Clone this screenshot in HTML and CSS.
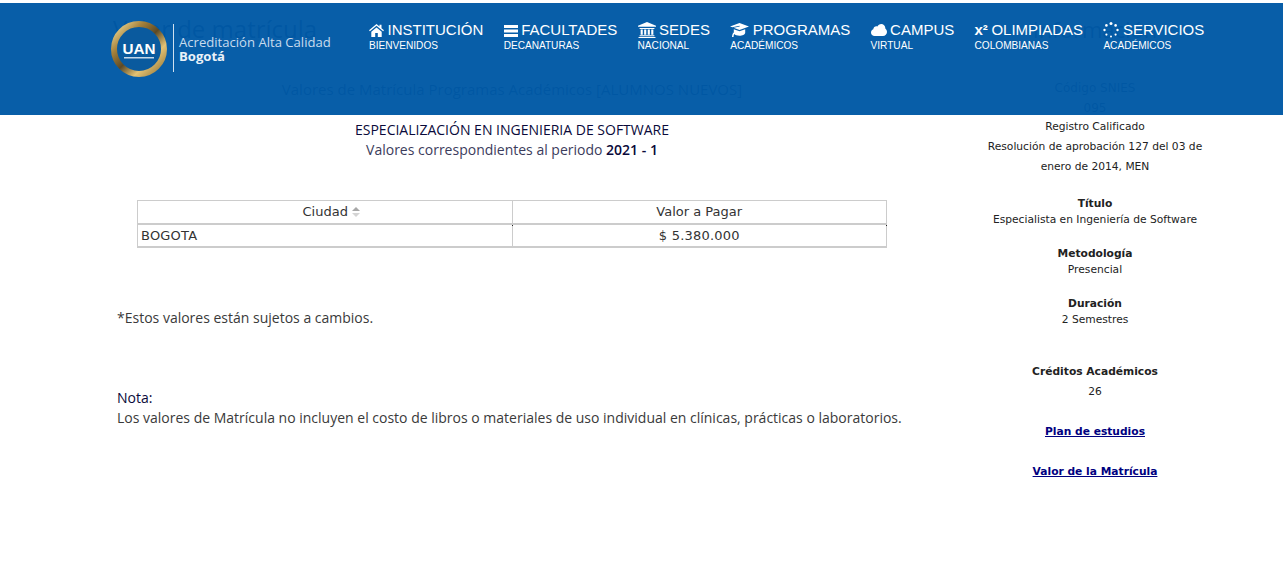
FILE: index.html
```html
<!DOCTYPE html>
<html lang="es">
<head>
<meta charset="utf-8">
<title>Valor de matrícula</title>
<link rel="stylesheet" href="styles.css">
</head>
<body>
<header class="topbar">
  <div class="brand">
    <svg class="logo" width="60" height="60" viewBox="0 0 60 60">
      <defs>
        <linearGradient id="gold" x1="0" y1="0" x2="1" y2="1">
          <stop offset="0" stop-color="#f6e3a0"/>
          <stop offset=".28" stop-color="#a5813a"/>
          <stop offset=".5" stop-color="#5c4a26"/>
          <stop offset=".72" stop-color="#e3c274"/>
          <stop offset="1" stop-color="#8f7335"/>
        </linearGradient>
      </defs>
      <circle cx="29" cy="29" r="25" fill="#0a5a9e" stroke="url(#gold)" stroke-width="6"/>
      <text x="29" y="34" text-anchor="middle" textLength="33" lengthAdjust="spacingAndGlyphs" class="logo-text">UAN</text>
      <rect x="14" y="37" width="30" height="1.500" fill="#c7d9ea"/>
    </svg>
    <span class="brand-rule"></span>
    <div class="brand-text">
      <span class="brand-line">Acreditación Alta Calidad</span>
      <strong class="brand-city">Bogotá</strong>
    </div>
  </div>
  <nav class="nav">
    <a class="nav-item">
      <span class="nav-main">
        <svg class="ic" width="15" height="13" viewBox="0 0 15 13"><path d="M7.500 0 0 6.300l.9 1L7.500 1.800l6.600 5.500.9-1L12.500 4.200V.7h-2v1.800zM2.300 7.700V13h3.900V9h2.600v4h3.900V7.700L7.500 3.400z"/></svg>
        INSTITUCIÓN
      </span>
      <span class="nav-sub">BIENVENIDOS</span>
    </a>
    <a class="nav-item">
      <span class="nav-main">
        <svg class="ic" width="14" height="13" viewBox="0 0 14 13"><path d="M0 1h14v3H0zM0 5.500h14v3H0zM0 10h14v3H0z"/></svg>
        FACULTADES
      </span>
      <span class="nav-sub">DECANATURAS</span>
    </a>
    <a class="nav-item">
      <span class="nav-main">
        <svg class="ic" width="18" height="16" viewBox="0 0 17 15"><path d="M8.500 0 17 3.400v1.100H0V3.400zM1.500 5.500h14v1H1.500zM2.500 7h2v5h-2zM5.800 7h2v5h-2zM9.200 7h2v5h-2zM12.500 7h2v5h-2zM1.500 12.500h14v1H1.500zM.5 14h16v1H.5z"/></svg>
        SEDES
      </span>
      <span class="nav-sub">NACIONAL</span>
    </a>
    <a class="nav-item">
      <span class="nav-main">
        <svg class="ic" width="19" height="14" viewBox="0 0 19 14"><path d="M9.500 0 19 3.500 9.500 7 3.600 4.800 9.700 3.600l-.2-.8-7 1.400L0 3.500zM3.800 6.200l5.700 2.100 5.700-2.100v3.600c0 1.700-3 3-5.700 3-2.300 0-4.300-.7-5.300-1.700-.4.800-.6 1.800-.7 2.900H2c.1-1.500.4-2.900 1-3.800-.2-.3-.2-.5-.2-.7l1 .4z"/></svg>
        PROGRAMAS
      </span>
      <span class="nav-sub">ACADÉMICOS</span>
    </a>
    <a class="nav-item">
      <span class="nav-main">
        <svg class="ic" width="16" height="12" viewBox="0 0 16 12"><path d="M3.600 12C1.600 12 0 10.500 0 8.500c0-1.500.9-2.800 2.300-3.300C2.500 3.500 3.800 2.300 5.400 2.300c.4 0 .7.100 1 .2C7.100 1 8.600 0 10.200 0c2.300 0 4.100 1.800 4.100 4.100v.5C15.300 5.300 16 6.600 16 8c0 2.200-1.800 4-4 4z"/></svg>
        CAMPUS
      </span>
      <span class="nav-sub">VIRTUAL</span>
    </a>
    <a class="nav-item">
      <span class="nav-main"><b class="sup-icon">x²</b> OLIMPIADAS</span>
      <span class="nav-sub">COLOMBIANAS</span>
    </a>
    <a class="nav-item">
      <span class="nav-main">
        <svg class="ic" width="16" height="16" viewBox="0 0 16 16"><g><circle cx="8" cy="1.500" r="1.500"/><circle cx="12.600" cy="3.400" r="1.300"/><circle cx="14.500" cy="8" r="1.200"/><circle cx="12.600" cy="12.600" r="1.100"/><circle cx="8" cy="14.500" r="1"/><circle cx="3.400" cy="12.600" r="1.100"/><circle cx="1.500" cy="8" r="1.200"/><circle cx="3.400" cy="3.400" r="1.300"/></g></svg>
        SERVICIOS
      </span>
      <span class="nav-sub">ACADÉMICOS</span>
    </a>
  </nav>
</header>

<div class="page">
  <main class="content">
    <h1 class="page-title">Valor de matrícula</h1>
    <h2 class="section-title">Valores de Matrícula Programas Académicos [ALUMNOS NUEVOS]</h2>
    <p class="program">ESPECIALIZACIÓN EN INGENIERIA DE SOFTWARE</p>
    <p class="period">Valores correspondientes al periodo <strong>2021 - 1</strong></p>
    <table class="prices">
      <thead>
        <tr>
          <th class="sortable">Ciudad
            <svg class="sort" width="8" height="10" viewBox="0 0 8 10"><path class="sort-up" d="M4 0l4 4H0z"/><path class="sort-down" d="M0 6h8l-4 4z"/></svg>
          </th>
          <th>Valor a Pagar</th>
        </tr>
      </thead>
      <tbody>
        <tr>
          <td class="city">BOGOTA</td>
          <td class="amount">$ 5.380.000</td>
        </tr>
      </tbody>
    </table>
    <p class="disclaimer">*Estos valores están sujetos a cambios.</p>
    <p class="note"><span class="note-label">Nota:</span><br>Los valores de Matrícula no incluyen el costo de libros o materiales de uso individual en clínicas, prácticas o laboratorios.</p>
  </main>
  <aside class="sidebar">
    <h3 class="side-title">Información</h3>
    <p class="side-snies">Código SNIES</p>
    <p class="side-snies">095</p>
    <p class="side-line">Registro Calificado</p>
    <p class="side-line">Resolución de aprobación 127 del 03 de enero de 2014, MEN</p>
    <dl class="facts">
      <dt>Título</dt><dd>Especialista en Ingeniería de Software</dd>
      <dt>Metodología</dt><dd>Presencial</dd>
      <dt>Duración</dt><dd>2 Semestres</dd>
    </dl>
    <p class="credits-label">Créditos Académicos</p>
    <p class="credits-value">26</p>
    <a class="side-link" href="#">Plan de estudios</a>
    <a class="side-link" href="#">Valor de la Matrícula</a>
  </aside>
</div>
</body>
</html>
```
FILE: styles.css
```css
* { box-sizing: border-box; }
html, body { margin: 0; padding: 0; background: #fff; }
body { font-family: "Open Sans", sans-serif; color: #333; height: 562px; overflow: hidden; }

.topbar {
  position: absolute;
  top: 3px; left: 0; right: 0;
  height: 112px;
  background: rgba(0, 89, 165, 0.97);
  display: flex;
  align-items: flex-start;
  padding-left: 110px;
  color: #fff;
  z-index: 5;
}
.brand { display: flex; align-items: flex-start; width: 259px; padding-top: 17px; }
.logo { display: block; flex: none; }
.logo-text { font: 700 14px "Liberation Sans", sans-serif; fill: #fff; }
.brand-rule { width: 1px; height: 48px; margin: 4px 5px 0 3px; background: #cfe0ef; }
.brand-text { display: flex; flex-direction: column; padding-top: 15px; line-height: 14px; }
.brand-line { font-size: 13.100px; color: #c9dcee; white-space: nowrap; }
.brand-city { font-size: 13.100px; font-weight: 700; color: #e9f1f8; }

.nav { display: flex; gap: 20.300px; padding-top: 18px; font-family: "Liberation Sans", sans-serif; }
.nav-item { display: flex; flex-direction: column; white-space: nowrap; }
.nav-main { display: flex; align-items: center; gap: 3.500px; font-size: 15px; line-height: 18px; height: 18px; }
.nav-sub { font-size: 10.100px; line-height: 12px; margin-top: 1px; }
.ic { fill: #fff; flex: none; }
.sup-icon { font-size: 15px; font-weight: 700; }

.page { display: flex; padding-left: 117px; }
.content { width: 790px; flex: none; }
.page-title { margin: 13px 0 0 -4px; font-size: 24px; line-height: 32px; font-weight: 400; color: #1a2a5a; }
.section-title { margin: 33px 0 0; font-size: 15px; line-height: 22px; font-weight: 400; text-align: center; color: #1a2a5a; }
.program { margin: 20px 0 0; font-size: 14px; line-height: 20px; text-align: center; color: #0a0a3a; }
.period { margin: 0; font-size: 14px; line-height: 20px; text-align: center; color: #3c3c5c; }
.period strong { font-weight: 600; color: #0a0a3a; }

.prices {
  width: 750px;
  margin: 40px 0 0 20px;
  border-collapse: collapse;
  table-layout: fixed;
  font-family: "DejaVu Sans", sans-serif;
  font-size: 13px;
  color: #333;
  border: 1px solid #ccc;
  border-bottom: 2px solid #ccc;
}
.prices th { font-weight: 400; height: 23px; padding: 0; text-align: center; border-right: 1px solid #ccc; border-bottom: 2px solid #ccc; }
.prices .sortable { padding-left: 13px; }
.prices td { position: relative; height: 23px; padding: 0 3px; border-right: 1px solid #ccc; letter-spacing: .2px; }
.prices td::after { content: ""; position: absolute; top: 0; right: -1px; width: 1px; height: 1px; background: #222; }
.prices .amount { text-align: center; }
.sort { vertical-align: -1px; }
.sort-up { fill: #a8a8a8; }
.sort-down { fill: #d4d4d4; }

.disclaimer { margin: 60px 0 0; font-size: 14px; line-height: 20px; color: #3a3a3a; }
.note { margin: 60px 0 0; font-size: 14px; line-height: 20px; color: #3a3a3a; }
.note-label { color: #0a0a3a; }

.sidebar { width: 220px; margin-left: 78px; flex: none; text-align: center; font-family: "DejaVu Sans", sans-serif; font-size: 10.700px; color: #222; }
.side-title { margin: 14px 0 0; font: 400 22px/30px "Open Sans", sans-serif; color: #1a2a5a; }
.side-snies { margin: 0; font-size: 12px; line-height: 20px; color: #1a2a5a; }
.side-snies:first-of-type { margin-top: 34px; }
.side-line { margin: 0; line-height: 20px; }
.side-snies + .side-line { margin-top: -1px; }
.facts { margin: 19px 0 0; }
.facts dt { font-weight: 700; line-height: 16px; margin-top: 19px; }
.facts dt:first-child { margin-top: 0; }
.facts dd { margin: 0; line-height: 15px; }
.credits-label { margin: 37px 0 0; font-weight: 700; line-height: 15px; }
.credits-value { margin: 5px 0 0; line-height: 15px; }
.side-link { display: block; margin-top: 25px; font-weight: 700; line-height: 15px; color: #000080; text-decoration: underline; }
```
